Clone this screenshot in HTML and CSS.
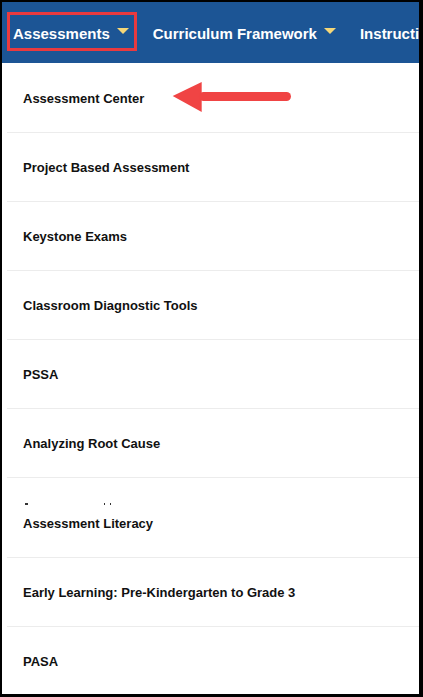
FILE: index.html
```html
<!DOCTYPE html>
<html lang="en">
<head>
<meta charset="utf-8">
<title>Assessments menu</title>
<link rel="stylesheet" href="styles.css">
</head>
<body>
<div class="frame">
  <nav class="topnav">
    <div class="nav-item active"><span>Assessments</span><i class="caret"></i></div>
    <div class="nav-item"><span>Curriculum Framework</span><i class="caret"></i></div>
    <div class="nav-item"><span>Instructional Materials</span><i class="caret"></i></div>
  </nav>
  <ul class="menu">
    <li class="menu-item">Assessment Center</li>
    <li class="menu-item">Project Based Assessment</li>
    <li class="menu-item">Keystone Exams</li>
    <li class="menu-item">Classroom Diagnostic Tools</li>
    <li class="menu-item">PSSA</li>
    <li class="menu-item">Analyzing Root Cause</li>
    <li class="menu-item tall">
      <span class="ghost" aria-hidden="true"><b class="g1"></b><b class="g2"></b><b class="g3"></b></span>
      Assessment Literacy
    </li>
    <li class="menu-item">Early Learning: Pre-Kindergarten to Grade 3</li>
    <li class="menu-item">PASA</li>
  </ul>
  <svg class="arrow" width="122" height="32" viewBox="0 0 122 32" aria-hidden="true">
    <polygon points="0.7,15 29.7,1 29.7,31" fill="#f04444"/>
    <rect x="27" y="11" width="92" height="9" rx="4.5" fill="#f04444"/>
  </svg>
</div>
</body>
</html>
```
FILE: styles.css
```css
html, body {
  margin: 0;
  padding: 0;
  background: #000;
}
body {
  width: 423px;
  height: 697px;
  overflow: hidden;
  font-family: "Liberation Sans", Arial, sans-serif;
}
.frame {
  position: relative;
  margin: 2px 4px 0 2px;
  width: 417px;
  height: 692px;
  background: #fff;
  overflow: hidden;
}
.topnav {
  height: 61px;
  box-sizing: border-box;
  background: #1c5595;
  display: flex;
  align-items: flex-start;
  padding: 10px 0 0 5px;
  gap: 10px;
  white-space: nowrap;
}
.nav-item {
  flex: none;
  height: 39px;
  box-sizing: border-box;
  display: flex;
  align-items: center;
  gap: 7px;
  padding: 3px 5px 0 3px;
  border: 3px solid transparent;
  color: #fff;
  font-weight: bold;
  font-size: 15px;
}
.nav-item.active {
  border-color: #e93a3f;
}
.caret {
  display: block;
  width: 0;
  height: 0;
  border-left: 6px solid transparent;
  border-right: 6px solid transparent;
  border-top: 6px solid #f5d778;
  margin-bottom: 5px;
}
.menu {
  list-style: none;
  margin: 0;
  padding: 1px 0 0 5px;
}
.menu-item {
  position: relative;
  height: 69px;
  box-sizing: border-box;
  display: flex;
  align-items: center;
  padding: 0 0 0 16px;
  border-bottom: 1px solid #ececec;
  color: #111;
  font-weight: bold;
  font-size: 13px;
}
.menu-item.tall {
  height: 80px;
  padding-top: 11px;
}
.ghost b {
  position: absolute;
  top: 25px;
  height: 2px;
  background: #333;
}
.ghost .g1 { left: 18px; width: 3px; }
.ghost .g2 { left: 97px; width: 1px; }
.ghost .g3 { left: 103px; width: 1px; }
.arrow {
  position: absolute;
  left: 170px;
  top: 79px;
}
```
